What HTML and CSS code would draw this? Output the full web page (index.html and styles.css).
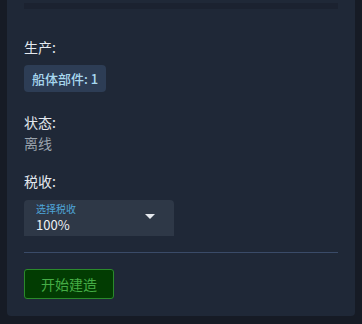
FILE: index.html
```html
<!DOCTYPE html>
<html lang="zh">
<head>
<meta charset="utf-8">
<link rel="stylesheet" href="styles.css">
</head>
<body>
<div class="panel">
  <div class="topbar"></div>
  <div class="section">
    <div class="label">生产:</div>
    <div class="chips"><span class="chip">船体部件: 1</span></div>
  </div>
  <div class="section">
    <div class="label">状态:</div>
    <div class="value">离线</div>
  </div>
  <div class="section">
    <div class="label">税收:</div>
    <div class="select">
      <div class="select-text">
        <span class="select-label">选择税收</span>
        <span class="select-value">100%</span>
      </div>
      <svg class="arrow" width="10" height="5" viewBox="0 0 10 5"><path d="M0 0 L10 0 L5 5 Z" fill="#e6e9ee"/></svg>
    </div>
  </div>
  <hr class="divider">
  <button class="build">开始建造</button>
</div>
</body>
</html>
```
FILE: styles.css
```css
* { box-sizing: border-box; }
html, body { margin: 0; padding: 0; }
body {
  background: #161b25;
  width: 362px;
  height: 324px;
  overflow: hidden;
  font-family: "Noto Sans CJK SC", "Noto Sans", sans-serif;
}
.panel {
  margin-left: 7px;
  width: 348px;
  height: 316px;
  background: #1f2837;
  border-radius: 0 0 4px 4px;
  padding: 3px 17px 0;
  display: flex;
  flex-direction: column;
}
.topbar {
  height: 6px;
  background: #1b2230;
}
.section {
  display: flex;
  flex-direction: column;
}
.section:nth-of-type(2) { margin-top: 28px; }
.section:nth-of-type(3) { margin-top: 20px; }
.section:nth-of-type(4) { margin-top: 18px; }
.label {
  color: #e4e9ef;
  font-size: 14px;
  line-height: 20px;
}
.chips { margin-top: 8px; display: flex; }
.chip {
  background: #2d3d55;
  color: #a8d8ef;
  font-size: 13px;
  font-weight: 500;
  line-height: 27px;
  height: 27px;
  padding: 0 8px;
  border-radius: 4px;
}
.value {
  margin-top: 1px;
  color: #9aa3ad;
  font-size: 14px;
  line-height: 20px;
}
.select {
  margin-top: 9px;
  width: 150px;
  height: 36px;
  background: #2e3847;
  border-radius: 4px 4px 0 0;
  display: flex;
  align-items: center;
  justify-content: space-between;
  padding: 0 19px 0 12px;
}
.select-text { display: flex; flex-direction: column; margin-top: -1px; }
.select-label {
  color: #4fa6d9;
  font-size: 10px;
  line-height: 14px;
}
.select-value {
  color: #eef1f5;
  font-size: 13px;
  line-height: 17px;
}
.arrow { margin-top: -3px; }
.divider {
  margin: 16px 0 0;
  border: 0;
  height: 1px;
  background: #3a4b68;
}
.build {
  margin-top: 16px;
  align-self: flex-start;
  width: 90px;
  height: 30px;
  background: #023c02;
  border: 1px solid #2b8a2b;
  border-radius: 3px;
  color: #45ad45;
  font-family: inherit;
  font-size: 14px;
  padding: 0;
}
```
